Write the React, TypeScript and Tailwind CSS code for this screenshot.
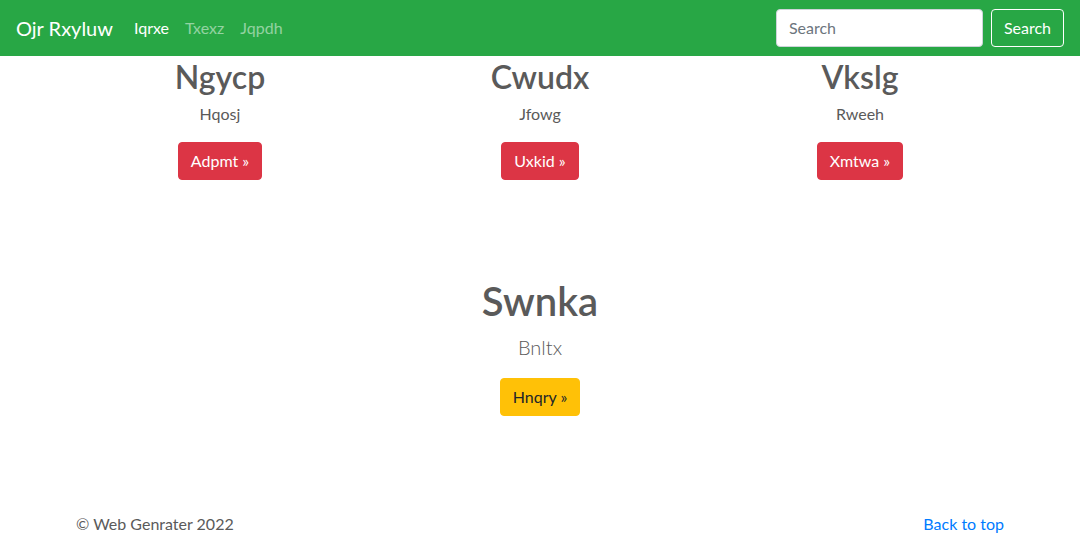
export default function App() {
  const cols = [
    { h: "Ngycp", p: "Hqosj", b: "Adpmt" },
    { h: "Cwudx", p: "Jfowg", b: "Uxkid" },
    { h: "Vkslg", p: "Rweeh", b: "Xmtwa" },
  ];
  return (
    <div className="min-h-[536px] bg-white text-[#5a5a5a]" style={{ fontFamily: 'Lato, "Noto Sans", sans-serif' }}>
      <nav className="h-14 bg-[#28a745] flex items-center px-4">
        <span className="text-white text-[20px] mr-[13px] py-[5px] leading-[1.5]">Ojr Rxyluw</span>
        <div className="flex">
          <a className="px-2 text-white text-base leading-[1.5]">Iqrxe</a>
          <a className="px-2 text-white/50 text-base leading-[1.5]">Txexz</a>
          <a className="px-2 text-white/50 text-base leading-[1.5]">Jqpdh</a>
        </div>
        <div className="ml-auto flex items-center">
          <div className="w-[207px] h-[38px] bg-white rounded border border-[#ced4da] flex items-center px-3 text-[#6c757d] text-base mr-2">Search</div>
          <button className="h-[38px] px-3 rounded border border-white text-white text-base">Search</button>
        </div>
      </nav>
      <div className="w-[960px] mx-auto">
        <div className="grid grid-cols-3 pt-[2px]">
          {cols.map((c) => (
            <div key={c.h} className="text-center px-[15px]">
              <h2 className="text-[32px] font-semibold leading-[1.2] mb-[6px] mt-0">{c.h}</h2>
              <p className="text-base leading-[1.5] mb-4">{c.p}</p>
              <a className="inline-block bg-[#dc3545] text-white rounded px-3 h-[38px] leading-[36px] border border-[#dc3545] text-base">{c.b} »</a>
            </div>
          ))}
        </div>
        <div className="text-center mt-[97px]">
          <h2 className="text-[40px] font-semibold leading-[1.2] mb-[7px] text-[#5a5a5a]">Swnka</h2>
          <p className="text-[20px] font-light leading-[1.5] mb-4">Bnltx</p>
          <a className="inline-block bg-[#ffc107] text-[#212529] rounded px-3 h-[38px] leading-[36px] border border-[#ffc107] text-base">Hnqry »</a>
        </div>
      </div>
      <footer className="w-[960px] mx-auto px-4 mt-[96px] flex justify-between text-base leading-[1.5]">
        <p>© Web Genrater 2022</p>
        <a className="text-[#007bff]">Back to top</a>
      </footer>
    </div>
  );
}
